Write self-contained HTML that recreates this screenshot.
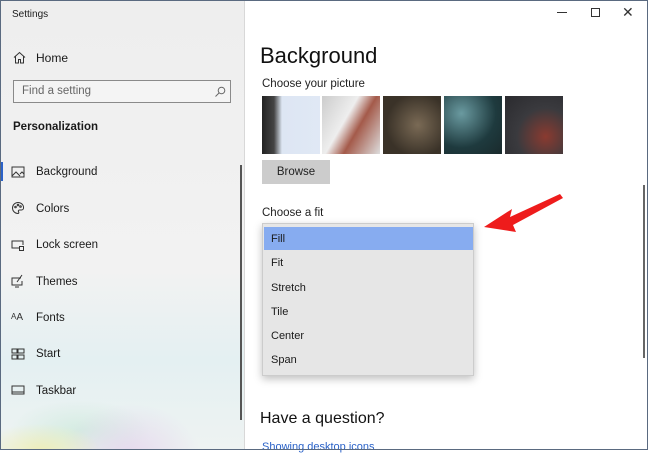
<!DOCTYPE html>
<html><head><style>
*{margin:0;padding:0;box-sizing:border-box}
body{width:648px;height:450px;overflow:hidden;font-family:"Liberation Sans",sans-serif;position:relative;background:#fff}
.a{position:absolute}
#side{left:0;top:0;width:244px;height:450px;background:linear-gradient(180deg,#eeeeee 0%,#f2f2f2 60%,#e4f0f2 80%,#eef3f2 100%);overflow:hidden}
.t{font-size:11.5px;color:#1a1a1a}
.nav{left:36px;font-size:11.5px;color:#1a1a1a}
.ic{left:11px;width:14px;height:14px}
.opt{left:271px;font-size:11px;color:#1a1a1a}
.th{top:96px;width:58px;height:58px}
</style></head><body>
<div class="a" id="side">
 <div class="a" style="left:0;top:360px;width:244px;height:90px;background:radial-gradient(ellipse at 40px 90px,rgba(240,235,150,.6),transparent 60px),radial-gradient(ellipse at 130px 95px,rgba(225,200,235,.6),transparent 70px),radial-gradient(ellipse at 80px 70px,rgba(190,230,210,.5),transparent 70px)"></div>
</div>
<div class="a" style="left:0;top:0;width:648px;height:450px;border:1px solid #5a6a80;pointer-events:none;z-index:5"></div>
<div class="a" style="left:244px;top:0;width:1px;height:450px;background:#d8d8d8"></div>
<div class="a t" style="left:12px;top:9px;font-size:10px">Settings</div>
<svg class="a" style="left:13px;top:51px" width="13" height="13" viewBox="0 0 13 13" fill="none" stroke="#333" stroke-width="1"><path d="M1 6.5L6.5 1.5 12 6.5M2.5 5.5V12H5.5V8.5H7.5V12H10.5V5.5"/></svg>
<div class="a nav" style="top:51px;font-size:12px">Home</div>
<div class="a" style="left:13px;top:80px;width:218px;height:23px;border:1px solid #8a8a8a;background:#f4f4f4"></div>
<div class="a" style="left:22px;top:85px;font-size:11.5px;color:#666">Find a setting</div>
<svg class="a" style="left:214px;top:86px" width="12" height="12" viewBox="0 0 12 12" fill="none" stroke="#666"><circle cx="7.5" cy="4.5" r="3.3"/><path d="M5 7L1.5 10.5"/></svg>
<div class="a" style="left:13px;top:121px;font-size:11.5px;font-weight:bold;color:#1a1a1a">Personalization</div>
<div class="a" style="left:0;top:162px;width:3px;height:19px;background:#2b62c8"></div>
<div class="a" style="left:240px;top:165px;width:2px;height:255px;background:#555"></div>
<svg class="a ic" style="top:165px" viewBox="0 0 14 14" fill="none" stroke="#333"><rect x="1" y="2" width="12" height="10"/><path d="M1 11l4-4 4 4M9 9l2-2 2 2"/></svg>
<div class="a nav" style="top:166px">Background</div>
<svg class="a ic" style="top:201px" viewBox="0 0 14 14" fill="none" stroke="#333"><path d="M7 1.5a5.5 5.5 0 1 0 0 11c1 0 1-1 .5-1.8s0-1.7 1-1.7h2A2 2 0 0 0 12.5 7 5.5 5 0 0 0 7 1.5z"/><circle cx="4.5" cy="6" r=".8"/><circle cx="7" cy="4" r=".8"/><circle cx="9.5" cy="5.5" r=".8"/></svg>
<div class="a nav" style="top:203px">Colors</div>
<svg class="a ic" style="top:238px" viewBox="0 0 14 14" fill="none" stroke="#333"><path d="M8 10H1V3h11v4"/><rect x="8.5" y="8.5" width="4" height="4"/></svg>
<div class="a nav" style="top:239px">Lock screen</div>
<svg class="a ic" style="top:274px" viewBox="0 0 14 14" fill="none" stroke="#333"><path d="M10 4H1v7h10V7M4 13h4M11 1L6 8"/></svg>
<div class="a nav" style="top:276px">Themes</div>
<div class="a" style="left:11px;top:312px;font-size:10px;color:#333"><span style="font-size:8px;vertical-align:top">A</span>A</div>
<div class="a nav" style="top:312px">Fonts</div>
<svg class="a ic" style="top:347px" viewBox="0 0 14 14" fill="none" stroke="#333"><rect x="1" y="2" width="5" height="4"/><rect x="7" y="2" width="6" height="4"/><rect x="1" y="8" width="5" height="4"/><rect x="7" y="8" width="6" height="4"/></svg>
<div class="a nav" style="top:348px">Start</div>
<svg class="a ic" style="top:383px" viewBox="0 0 14 14" fill="none" stroke="#333"><rect x="1" y="3" width="12" height="8"/><path d="M1 9h12"/></svg>
<div class="a nav" style="top:385px">Taskbar</div>

<div class="a" style="left:557px;top:12px;width:10px;height:1px;background:#333"></div>
<div class="a" style="left:591px;top:8px;width:9px;height:9px;border:1px solid #333"></div>
<div class="a" style="left:622px;top:4px;font-size:14px;color:#333">✕</div>
<div class="a" style="left:260px;top:43px;font-size:22px;color:#111">Background</div>
<div class="a" style="left:262px;top:78px;font-size:11.5px;color:#222">Choose your picture</div>
<div class="a th" style="left:262px;background:linear-gradient(90deg,#222 0,#444 12px,#dde6f3 20px,#e0e8f5)"></div>
<div class="a th" style="left:322px;background:linear-gradient(120deg,#ccc,#eee 40%,#a45a4a 60%,#ddd)"></div>
<div class="a th" style="left:383px;background:radial-gradient(circle at 60% 50%,#7a6a55,#3a3228 70%)"></div>
<div class="a th" style="left:444px;background:radial-gradient(circle at 30% 30%,#6a9aa0,#1e3a3e 60%,#1a2a2c)"></div>
<div class="a th" style="left:505px;background:radial-gradient(circle at 70% 70%,#8a3a30,#3a3a3e 50%,#2a2a2e)"></div>
<div class="a" style="left:262px;top:160px;width:68px;height:24px;background:#cccccc;font-size:11.5px;color:#222;text-align:center;line-height:25px">Browse</div>
<div class="a" style="left:643px;top:185px;width:2px;height:173px;background:#666"></div>
<div class="a" style="left:262px;top:207px;font-size:11.5px;color:#222">Choose a fit</div>
<div class="a" style="left:262px;top:223px;width:212px;height:153px;background:#e6e6e6;border:1px solid #ccc;box-shadow:0 3px 8px rgba(0,0,0,.25)"></div>
<div class="a" style="left:264px;top:227px;width:209px;height:23px;background:#87acf0"></div>
<div class="a opt" style="top:233px">Fill</div>
<div class="a opt" style="top:257px">Fit</div>
<div class="a opt" style="top:282px">Stretch</div>
<div class="a opt" style="top:306px">Tile</div>
<div class="a opt" style="top:330px">Center</div>
<div class="a opt" style="top:354px">Span</div>
<svg class="a" style="left:480px;top:192px" width="85" height="45" viewBox="0 0 85 45"><path d="M80 2L30 25 32 17 4 35 36 40 33 33 83 6z" fill="#ee1c1c"/></svg>
<div class="a" style="left:260px;top:410px;font-size:16px;color:#111">Have a question?</div>
<div class="a" style="left:262px;top:441px;font-size:11px;color:#2a62c8">Showing desktop icons</div>
</body></html>
